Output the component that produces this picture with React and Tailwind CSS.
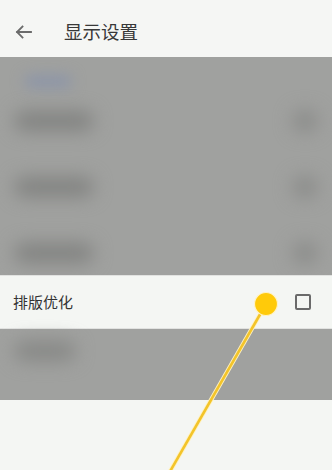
import React from "react";

const font = { fontFamily: '"Noto Sans CJK SC", "Noto Sans", sans-serif' };

function Blob({ className }) {
  return <div className={"rounded-full blur-[9px] " + className} />;
}

function GrayRow() {
  return (
    <div className="flex h-[66px] shrink-0 items-center justify-between pl-[14px] pr-[14px]">
      <Blob className="h-[20px] w-[80px] bg-[#828381]" />
      <Blob className="h-[22px] w-[26px] bg-[#8b8c8a]" />
    </div>
  );
}

export default function App() {
  return (
    <div className="relative h-[470px] w-[332px] overflow-hidden bg-[#f4f6f3]" style={font}>
      {/* Header */}
      <div className="flex h-[57px] items-center bg-[#f5f6f4]">
        <svg className="ml-[15px] mt-[6px]" width="17" height="14" viewBox="0 0 17 14" fill="none">
          <path d="M16 7H2M7.5 1.5L2 7l5.5 5.5" stroke="#6b6b6b" strokeWidth="1.8" strokeLinecap="square" />
        </svg>
        <div className="ml-[32px] mt-[6px] text-[18.5px] leading-none text-[#383838]">显示设置</div>
      </div>

      {/* Dimmed blurred area */}
      <div className="flex h-[218px] flex-col overflow-hidden bg-[#a0a19f]">
        <div className="ml-[24px] mt-[18px] h-[13px] w-[48px] shrink-0 rounded-full bg-[#8c95a8] blur-[7px]" />
        <GrayRow />
        <GrayRow />
        <GrayRow />
      </div>

      {/* Highlighted row */}
      <div className="flex h-[54px] items-center justify-between border-y border-[#e1e2e0] bg-[#f4f6f3] pl-[13px] pr-[21px]">
        <div className="text-[15px] text-[#333333]">排版优化</div>
        <div className="h-[16px] w-[16px] rounded-[2px] border-2 border-[#6a6a6a]" />
      </div>

      {/* Second dimmed area */}
      <div className="flex h-[71px] items-start bg-[#a0a19f] pl-[14px] pt-[12px]">
        <Blob className="h-[20px] w-[62px] bg-[#878886]" />
      </div>

      {/* Touch indicator overlay */}
      <svg className="pointer-events-none absolute left-0 top-0" width="332" height="470" viewBox="0 0 332 470">
        <line x1="266" y1="304" x2="168" y2="475" stroke="#fff3c4" strokeWidth="4.5" />
        <line x1="266" y1="304" x2="168" y2="475" stroke="#f3c42a" strokeWidth="2.6" />
        <circle cx="266" cy="304" r="11.5" fill="#ffca0a" stroke="#fff3c8" strokeWidth="1.2" />
      </svg>
    </div>
  );
}
